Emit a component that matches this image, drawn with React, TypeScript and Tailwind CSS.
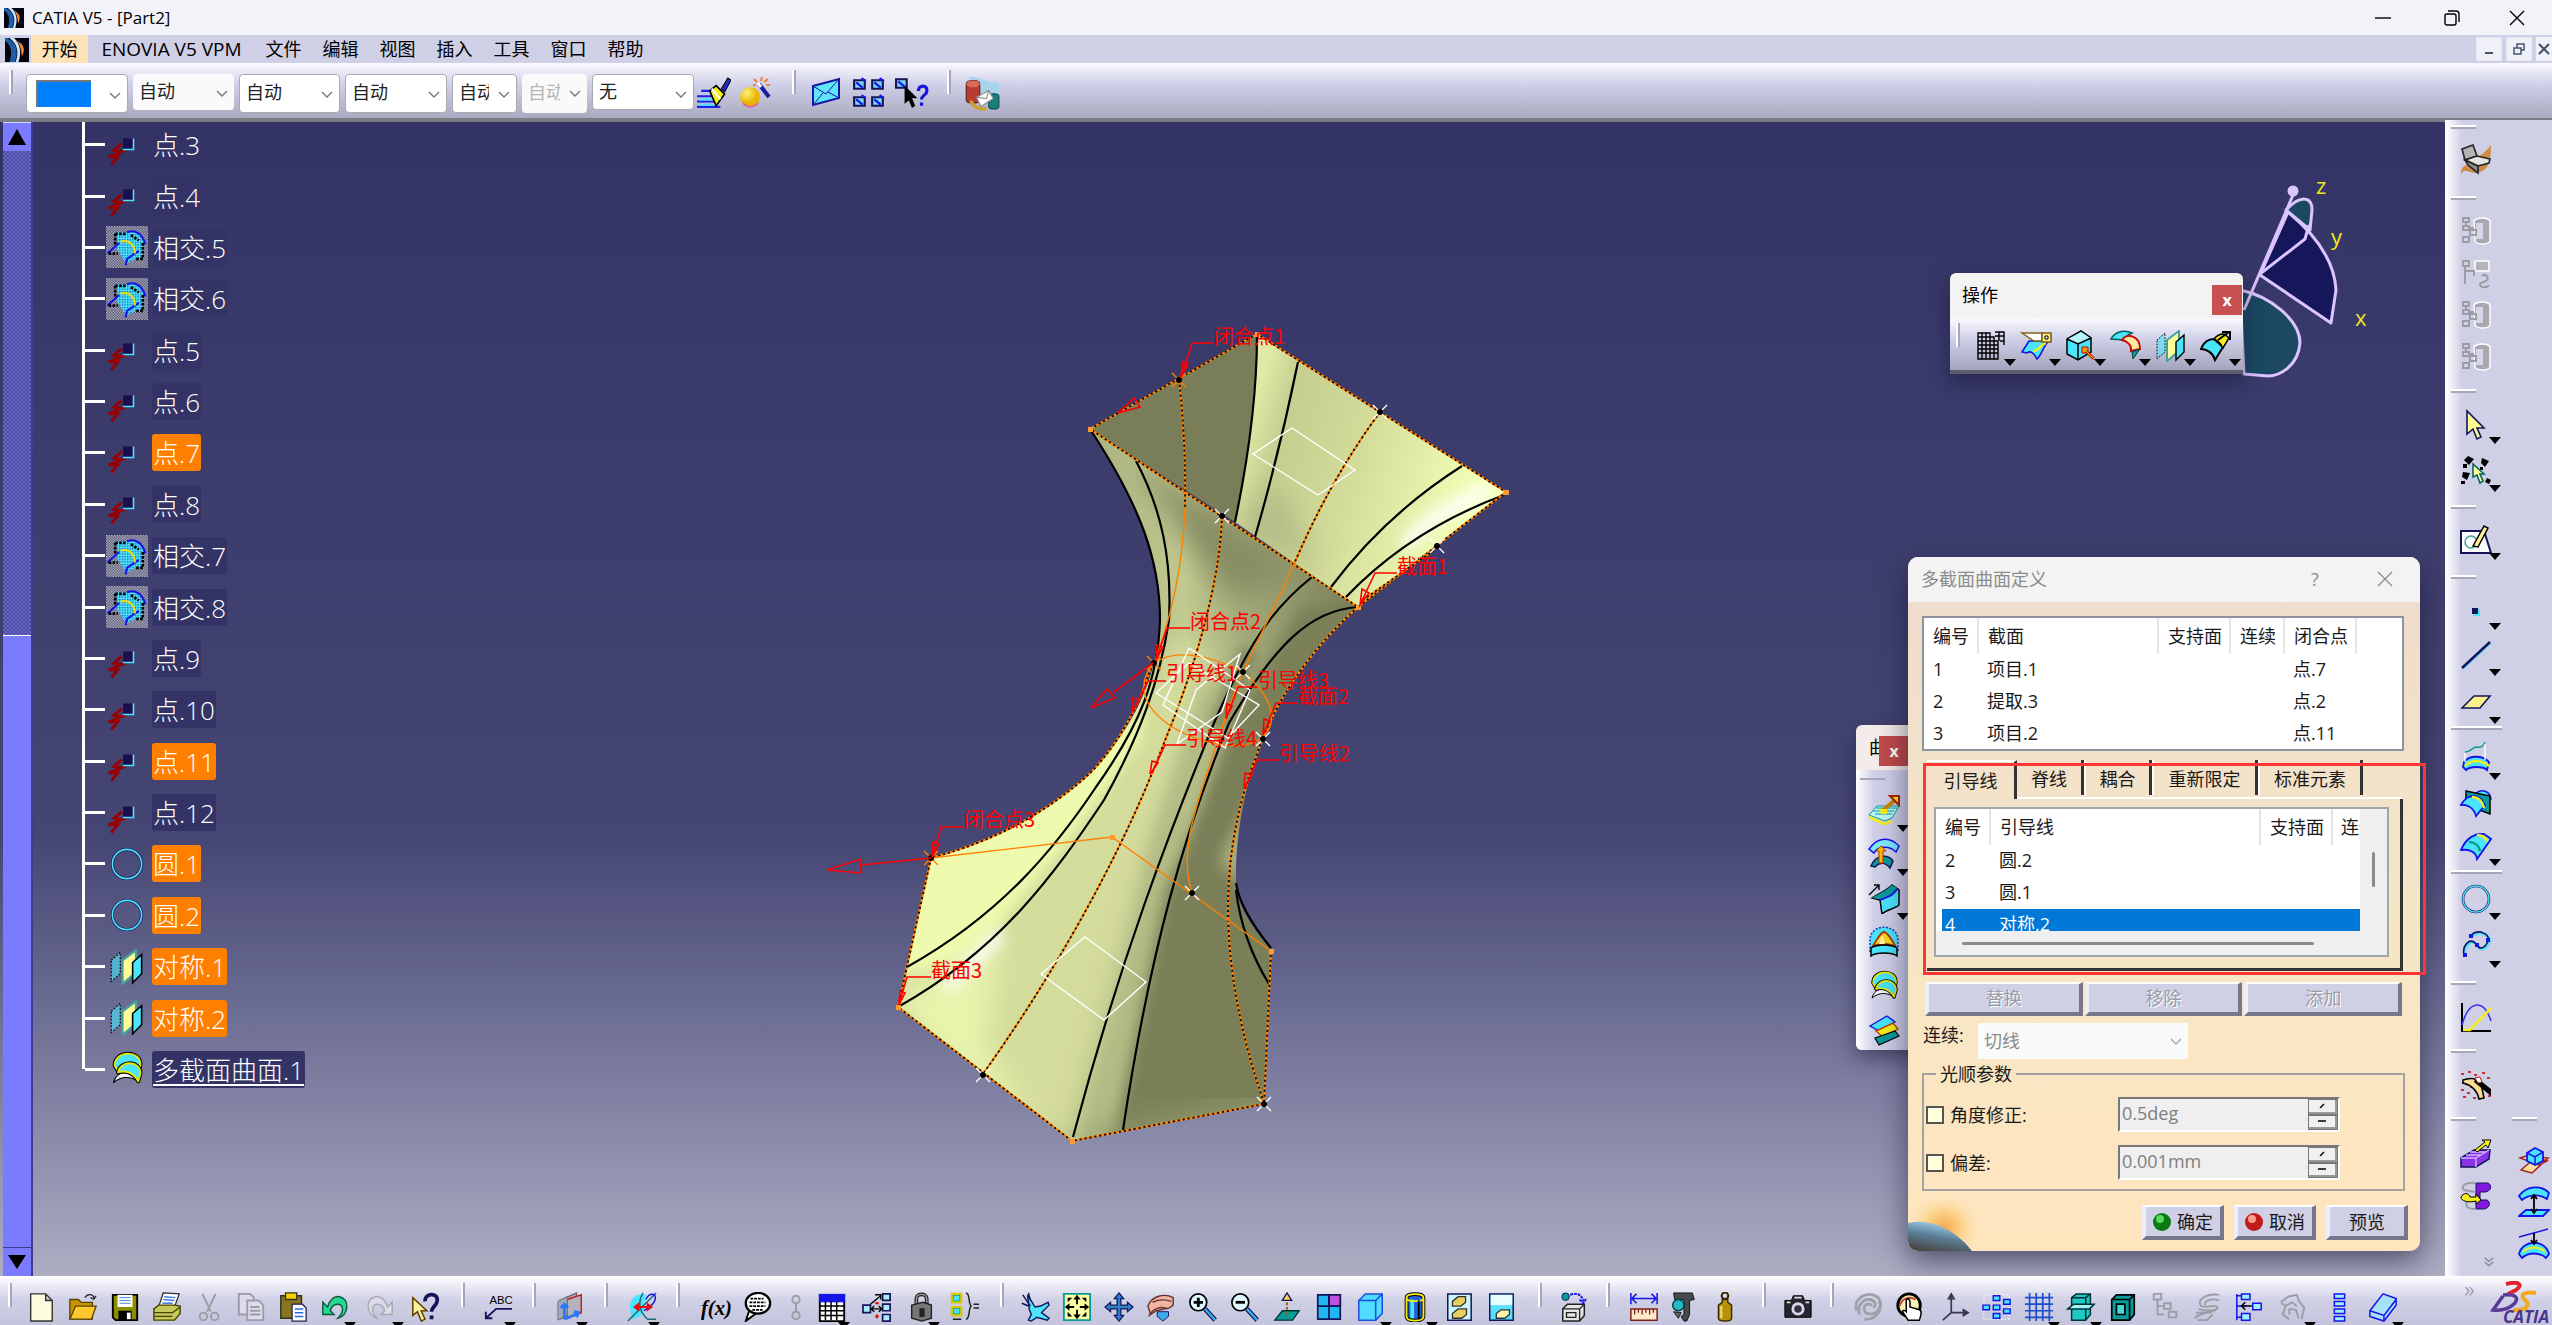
import type { ReactNode } from "react"

const C = "#4ae4fc"
const N = "#14145a"
const B = "#1414e6"
const Y = "#f6ee1c"
const T = "#0a9a9a"

const grey = { fill: "none", stroke: "#9c9ca4", strokeWidth: 2 }

const icons: Record<string, ReactNode> = {
  app: (
    <g>
      <rect width="32" height="32" fill="#050510" />
      <path d="M3 0C15 6 19 18 13 32H6C10 20 9 10 0 4V0Z" fill="#1f5fa8" />
      <path d="M6 0c11 8 13 20 8 32h4C23 18 19 6 12 0Z" fill="#c8e8ff" />
      <path d="M16 4c8 4 12 10 7 20-2-2 0-12-7-20Z" fill="#f08a2c" />
    </g>
  ),
  brush: (
    <g>
      <path d="M0 19h20M0 24h18M0 29h22M4 14h10" stroke="#2020f0" strokeWidth="2" />
      <path d="M2 22h16M2 27h16" stroke={C} strokeWidth="2" />
      <path d="M12 14 18 9l8 8-8 11Z" fill={Y} stroke="#000" strokeWidth="1.5" />
      <path d="m14 12 8 10" stroke="#fff" strokeWidth="2" />
      <path d="m23 12 6-10 3 2-6 11Z" fill="#2828d0" stroke="#000" />
    </g>
  ),
  wand: (
    <g>
      <defs>
        <radialGradient id="ball" cx="35%" cy="30%">
          <stop offset="0" stopColor="#fff27a" />
          <stop offset="1" stopColor="#e8b400" />
        </radialGradient>
      </defs>
      <circle cx="10" cy="21" r="10" fill="url(#ball)" />
      <path d="M3 27c4 5 11 5 15 0" stroke="#e060a0" strokeWidth="2" fill="none" />
      <path d="m19 8 10 13" stroke="#1c1c9c" strokeWidth="4" />
      <path d="m18 7 3 4" stroke="#fff" strokeWidth="3" />
      <path d="M14 3l3 3M22 1l-1 4M28 3l-4 3M13 9h3M26 9h4" stroke="#f08030" strokeWidth="2" />
    </g>
  ),
  mail: (
    <g>
      <path d="M3 10 29 3V22L3 29Z" fill="#5fe6fa" stroke="#1616a0" strokeWidth="2" />
      <path d="m3 10 13 8L29 3M3 29l10-12M29 22 18 16" fill="none" stroke="#1616a0" strokeWidth="1" />
    </g>
  ),
  squares: (
    <g fill="#7ad8f4" stroke={N} strokeWidth="2">
      <path d="M2 4h10v8H2ZM19 4h10v8H19ZM2 20h10v8H2ZM19 20h10v8H19Z" />
      <path d="m4 6 6 5M21 6l6 5M4 22l6 5M21 22l6 5M9 2l4 3M26 2l4 3M9 18l4 3M26 18l4 3" stroke={B} />
    </g>
  ),
  squareHelp: (
    <g>
      <path d="M1 3h10v8H1Z" fill="#7ad8f4" stroke={N} strokeWidth="2" />
      <path d="m3 5 6 5" stroke={B} strokeWidth="2" />
      <path d="m9 9 0 17 4-3 3 7 3-2-3-7h5Z" fill="#000" />
      <path d="M22 14c0-6 9-6 8 0 0 4-5 4-5 8m0 3v3" fill="none" stroke={B} strokeWidth="3" />
    </g>
  ),
  catalog: (
    <g>
      <path d="M4 1c8-2 16 6 27 5v12c-8 2-12-2-16-4Z" fill="#a7d4ea" />
      <path d="M2 7c0-4 12-4 12 0v14c0 4-12 4-12 0Z" fill="#b83c30" stroke="#6a1c14" />
      <ellipse cx="8" cy="7" rx="6" ry="3" fill="#d86c5c" />
      <path d="M22 18c0-3 9-3 9 0v9c0 3-9 3-9 0Z" fill="#16807c" stroke="#0c4c4c" />
      <path d="m11 19 11-6 4 7-11 7Z" fill="#fff" stroke="#888" />
      <path d="m11 19 9 1 2-7" fill="none" stroke="#888" />
      <path d="M6 22c2 6 8 8 14 7" stroke="#c8a030" strokeWidth="3" fill="none" />
    </g>
  ),
  point: (
    <g>
      <path d="M12 15 6 20l6 1-10 4 7 0-5 6" stroke="#960000" strokeWidth="2.2" fill="none" />
      <rect x="13" y="11" width="7" height="8" fill="#1a1050" />
      <path d="M21 11v8.500H13" stroke={C} strokeWidth="1.1" fill="none" />
    </g>
  ),
  intersect: (
    <g>
      <defs>
        <pattern id="dither" width="2" height="2" patternUnits="userSpaceOnUse">
          <path d="M0 0h1v1H0ZM1 1h1v1H1Z" fill="#c8c8c8" />
        </pattern>
        <pattern id="ditherBlue" width="2" height="2" patternUnits="userSpaceOnUse">
          <rect width="2" height="2" fill={C} />
          <path d="M0 0h1v1H0Z" fill="#1c5ca8" />
        </pattern>
      </defs>
      <rect width="32" height="32" fill="url(#dither)" />
      <path d="M7 5h9c6-2 11 2 13 8l-2 12h-5l-7 4-3-6-4-6 1-6Z" fill="url(#ditherBlue)" />
      <path d="M16 5c6-3 12 1 14 9M1 21l9-8M15 30l1-5 9-6" stroke={B} strokeWidth="1.6" fill="none" />
      <path d="M7 6h8M7 6v8M28 13v12h-5M2 21l7 0M19 7l6 4" stroke="#000" strokeWidth="2" strokeDasharray="2 1" fill="none" />
      <path d="M11 12c6-2 11 2 11 9" stroke="#f0e000" strokeWidth="1.6" fill="none" />
    </g>
  ),
  circle: (
    <g fill="none">
      <circle cx="16" cy="16" r="13" stroke={N} strokeWidth="2.6" />
      <circle cx="16" cy="16" r="13" stroke={C} strokeWidth="1.4" />
    </g>
  ),
  symmetry: (
    <g>
      <path d="M2 10 10 3v19l-8 7Z" fill={C} fillOpacity=".6" stroke="#000" strokeDasharray="1.5 1.5" />
      <path d="m12 10 12-9v20l-12 10Z" fill="#fdfd96" stroke="#46a0a0" strokeWidth="2" />
      <path d="m21 12 8-7v17l-8 8Z" fill={C} stroke="#000" strokeWidth="1.4" />
    </g>
  ),
  loft: (
    <g strokeLinejoin="round">
      <path d="M4 28c3-12 18-12 23 0-7-6-16-6-23 0Z" fill="#f4f4f4" stroke="#000" strokeWidth="1" />
      <path d="M5 13C5-1 28-1 28 12l-1 6H8Z" fill={C} stroke="#000" strokeWidth="3.4" />
      <path d="M5 13C5-1 28-1 28 12l-1 6H8Z" fill={C} stroke="#e8e800" strokeWidth="1.6" />
      <path d="M8 19C10 8 28 8 28 20l-2 7C22 19 14 17 8 19Z" fill={C} stroke="#000" strokeWidth="3.400" />
      <path d="M8 19C10 8 28 8 28 20l-2 7C22 19 14 17 8 19Z" fill={C} stroke="#e8e800" strokeWidth="1.6" />
    </g>
  ),
  gridTrim: (
    <g stroke="#000" strokeWidth="1.4" fill="none">
      <path d="M3 3h12v4h4v4h4v18H3ZM7 3v26M11 3v26M15 7v22M19 11v18M3 7h12M3 11h20M3 15h20M3 19h20M3 23h20" />
      <path d="M20 2h9v13M20 6h9M24 2v9M25 11h4" />
    </g>
  ),
  cut: (
    <g>
      <path d="M2 22 9 11h20c-5 3-6 12-12 18-3-6-7-9-10-6Z" fill={C} stroke={B} strokeWidth="1.6" />
      <path d="M13 21c6 0 8-7 13-8" stroke={Y} strokeWidth="2.4" fill="none" />
      <path d="M2 3h20v8H14Z" fill="#fff" stroke="#806010" strokeWidth="1.4" />
      <path d="M22 3h9v9h-9Z" fill="#fff080" stroke="#806010" strokeWidth="1.6" />
      <path d="M25 6h3v3h-3Z" fill="#fff" stroke="#000" />
    </g>
  ),
  cube: (
    <g>
      <path d="m2 9 14-8 10 7v14L13 30 2 24Z" fill={C} stroke="#000" strokeWidth="1.5" />
      <path d="m3 9 13-7 9 6-12 5Z" fill="#b8f4fc" />
      <path d="m2 9 11 5 13-6M13 14v16" stroke="#000" strokeWidth="1.5" fill="none" />
      <path d="M17 17h6v6h-6Z" fill="#f8a000" stroke="#c00000" />
      <path d="m21 21 8 8" stroke="#c03000" strokeWidth="3" />
      <path d="m21 21 8 8" stroke="#f8a000" strokeWidth="1" />
    </g>
  ),
  fillet: (
    <g>
      <path d="M1 9C6 0 16 0 22 3c-5 2-7 5-8 7Z" fill={C} stroke="#006060" strokeWidth="1.5" />
      <path d="M12 10c5-8 18-4 18 9l-9 2c1-6-4-10-9-11Z" fill="#fbe9a0" stroke="#d00000" strokeWidth="1.8" />
      <path d="m30 19-7 10-1-7Z" fill={T} stroke="#004040" />
    </g>
  ),
  extrapolate: (
    <g>
      <path d="M1 19c3-8 8-10 13-10l9 8-8 13c-2-7-8-11-14-11Z" fill={C} stroke="#000" strokeWidth="2" />
      <path d="M14 9c3-4 6-5 10-5l5 4-6 10c-2-4-4-7-9-9Z" fill={Y} stroke="#000" strokeWidth="1.5" />
      <path d="m18 10 11-8m-7 0h8v8" stroke="#000" strokeWidth="2" fill="none" />
    </g>
  ),
  offset: (
    <g>
      <path d="m1 21 8-9h22l-7 12-7 3-8-3Z" fill="#bdf6f6" stroke={T} strokeWidth="1" />
      <path d="m5 17h21M7 20h17M8 14h21" stroke={T} />
      <path d="m1 23 7 3 8 4 8-3" stroke={Y} strokeWidth="2.6" fill="none" />
      <path d="m13 18 14-12" stroke="#d08000" strokeWidth="4" />
      <path d="M11 15h8v5h-6Z" fill={Y} />
      <path d="M22 2h9v9Z" fill={Y} stroke="#b02000" strokeWidth="2" />
    </g>
  ),
  extrude: (
    <g>
      <path d="M1 11C10-2 23-1 31 8l-3 6C20 6 9 9 6 15Z" fill="#7eeafc" stroke={B} strokeWidth="1.5" />
      <path d="M3 28c5-12 17-12 22-5l-3 7c-5-6-10-6-15-1Z" fill={T} stroke={N} strokeWidth="1.5" />
      <path d="M11 25V13H8l5-5 5 5h-3v12Z" fill="#f8c000" stroke="#c03000" />
    </g>
  ),
  sweep: (
    <g>
      <path d="M4 16c6-4 14-7 20-13l7 5v15c-4 4-12 4-17 9l-2-14Z" fill={C} stroke="#000" strokeWidth="1.5" />
      <path d="M4 16c6-4 14-7 20-13l5 3c-4 7-10 8-17 11Z" fill={T} />
      <path d="M12 18c7-3 13-4 17-11" stroke={B} strokeWidth="2" fill="none" />
      <path d="M1 13 11 3M6 3h5v5" stroke="#000" strokeWidth="1.4" fill="none" />
    </g>
  ),
  fillSurf: (
    <g>
      <path d="M2 26V14C2-3 30-3 30 14v12Z" fill={C} stroke="#1a3aa0" strokeWidth="1.5" strokeDasharray="2 1.5" />
      <path d="M4 21C9 15 12 6 16 6s8 9 12 15c-7-4-17-4-24 0Z" fill="#ffd820" stroke="#b03000" strokeWidth="1.8" />
      <path d="M14 9l-3 9h6Z" fill="#fff8c0" />
      <path d="M3 30c5-4 21-4 26 0v-8c-6-4-20-4-26 0Z" fill={C} stroke="#000" strokeWidth="1.5" />
    </g>
  ),
  blend: (
    <g>
      <path d="m2 12 17-10 8 6-16 9Z" fill={C} stroke={B} strokeWidth="1.4" />
      <path d="m8 17 17-8 5 6-15 8Z" fill={Y} stroke="#c04000" strokeWidth="1.4" />
      <path d="m7 24 20-7 4 5-20 9Z" fill={T} stroke="#000" strokeWidth="1.2" />
    </g>
  ),
  workbench: (
    <g>
      <path d="M1 31c0-12 6-8 12-14 6-5 12-8 18-16 0 16-2 27-16 28-7 0-11-6-14 2Z" fill="#d08a48" />
      <path d="m2 5 11-4 4 11-12 4Z" fill="#b4b4b4" stroke="#222" strokeWidth="1.6" />
      <path d="m5 16 12-4 13 3-1 4-11 3Z" fill="#e4e4e4" stroke="#222" strokeWidth="1.6" />
      <path d="m5 16 13 6v7L8 21Z" fill="#8c8c8c" stroke="#222" strokeWidth="1.6" />
    </g>
  ),
  greyBody: (
    <g>
      <path d="M14 6c3-4 14-4 16 0v20c-2 4-13 4-15 0Z" fill="#a8a8b0" stroke="#fff" strokeWidth="1.5" />
      <path d="M16 8h7v16h-7Z" fill="#d6d6e6" />
      <path d="M3 3h6v4H3ZM3 11h6v4H3ZM10 15h6v5h-6ZM3 22h6v5H3ZM6 7v4M9 13h4v2" {...grey} />
    </g>
  ),
  greyBodySwap: (
    <g>
      <path d="M15 4h14v10H15Z" fill="#b4b4bc" stroke="#fff" strokeWidth="1.5" />
      <path d="M3 4h6v5H3ZM5 9v18M5 14h9v5M22 19c4-3 7 1 5 4s-8 2-7 5 7 3 9 0" {...grey} />
    </g>
  ),
  select: (
    <path d="M7 2v23l6-5 4 10 4-2-4-9h7Z" fill="#fdfd96" stroke={N} strokeWidth="1.6" />
  ),
  selectTrap: (
    <g>
      <path d="m8 2 6 3-5 6-5-5ZM22 4l7 3-4 6-4-4ZM3 18l7 1-3 7-5-3ZM1 27h4v3H1ZM20 13h3v3h-3ZM3 10h4v4H3ZM27 24l4 2-2 4-4-2Z" />
      <path d="M13 10v13l4-2 3 8 3-2-3-7h4Z" fill="#fdfd96" stroke="#066" strokeWidth="1.6" />
    </g>
  ),
  sketch: (
    <g>
      <path d="M1 6h23l7 22H1Z" fill="#fff" stroke={N} strokeWidth="2" />
      <circle cx="11" cy="17" r="6" fill="none" stroke="#40a890" strokeWidth="1.5" />
      <path d="M13 21 24 1l4 2-10 19Z" fill="#fdf09a" stroke="#000" strokeWidth="1.5" />
    </g>
  ),
  dot: (
    <g>
      <rect x="13" y="13" width="7" height="7" fill={C} />
      <rect x="12" y="12" width="6" height="6" fill={N} />
    </g>
  ),
  line: (
    <g>
      <path d="M3 30 31 4" stroke={C} strokeWidth="1.5" />
      <path d="M2 29 30 3" stroke={N} strokeWidth="2.4" />
    </g>
  ),
  plane: <path d="m2 22 12-12h16L20 22Z" fill="#fdf08c" stroke={N} strokeWidth="1.6" />,
  projection: (
    <g>
      <path d="M4 22c5-7 19-7 25 0l-2 8c-4-4-17-4-21 0l-3-3Z" fill={C} stroke={B} strokeWidth="1.8" />
      <path d="M5 26c6-6 16-7 24 0" stroke={Y} strokeWidth="2.4" fill="none" />
      <path d="M5 12c6 0 7-5 12-5 5 1 7-2 8-5" stroke={T} strokeWidth="1.4" fill="none" />
      <path d="M5 13v9M25 4v16" stroke="#fff" strokeWidth="1.4" />
    </g>
  ),
  surfCut: (
    <g>
      <path d="M16 6c7-5 14-1 15 6l-8 4Z" fill={C} stroke={B} strokeWidth="1.5" />
      <path d="m6 4 24 5v18L6 18Z" fill={T} stroke="#000" strokeWidth="1.5" />
      <path d="M1 18c5-9 12-11 19-7l5 7-9 11c-2-8-9-12-15-11Z" fill={C} stroke={B} strokeWidth="1.8" />
      <path d="M12 10c7 0 11 5 12 11" stroke={Y} strokeWidth="2.4" fill="none" />
    </g>
  ),
  surface: (
    <g>
      <path d="M1 20C6 8 15 3 24 4l7 5-14 20c-1-8-9-10-16-9Z" fill={C} stroke={B} strokeWidth="1.8" />
      <path d="M17 5c6 0 10 4 10 7" stroke={Y} strokeWidth="2.6" fill="none" />
      <path d="M9 12c6 0 10 4 11 9" stroke={T} strokeWidth="2.6" fill="none" />
    </g>
  ),
  spline: (
    <g>
      <path d="M12 6c8-7 20 0 17 6-3 7-8 10-12 3-6-8-14 2-12 11" stroke={C} strokeWidth="3" fill="none" />
      <path d="M11 5c8-7 20 0 17 6-3 7-8 10-12 3C10 6 2 16 4 25" stroke={N} strokeWidth="1.6" fill="none" />
      <path d="M9 4h4v4H9ZM15 13h4v4h-4ZM26 8h4v4h-4ZM3 23h4v4H3Z" fill={B} />
    </g>
  ),
  law: (
    <g fill="none" strokeWidth="2">
      <path d="M2 2v28h29" stroke="#000" />
      <path d="M2 24C9-2 24-2 31 20" stroke="#3434e8" strokeWidth="1.6" />
      <path d="M3 29h7L31 7" stroke={Y} strokeWidth="2.6" />
    </g>
  ),
  digitized: (
    <g>
      <path d="M1 5h3M8 3h3M14 6h3M22 4h3M2 14h3M1 21h3M7 24h3M3 28h3M13 29h3M20 28h3M27 9h3M10 18h3M28 27h3" stroke="#d03030" strokeWidth="2" />
      <path d="M3 11c8-3 14-2 18 4l3 14-5 1c-2-10-8-14-16-16Z" fill="#f8dc90" stroke="#000" strokeWidth="1.5" />
      <path d="m16 8 15 12v7L14 13Z" fill="#000" />
      <path d="m15 9 5-1 2 5-4 1Z" fill="#fff" stroke="#a03020" />
    </g>
  ),
  purpleBlock: (
    <g>
      <path d="m1 21 13-8h16l-1 9-13 8H1Z" fill="#8a34e8" stroke={N} strokeWidth="1.5" />
      <path d="m1 21h15l13-8M16 21v9M10 15h15M6 18h15" stroke="#d4b0ff" strokeWidth="1.4" fill="none" />
      <path d="m15 13 10-8-3-2h9l-3 8-2-3-9 7Z" fill={Y} stroke="#000" />
    </g>
  ),
  purpleRevolve: (
    <g>
      <path d="M16 3h12c4 2 4 8-3 9h-5v8h7c4 2 3 8-3 9h-8Z" fill="#8018e0" stroke={N} />
      <path d="M15 3C6 2 0 6 4 10l11 2M15 29c-8 0-10-4-8-7" {...grey} />
      <path d="M1 17c2-4 8-5 9 0h6v-3l5 6-5 4v-3c-8 2-15 0-15-4Z" fill={Y} stroke="#000" />
    </g>
  ),
  boxes: (
    <g>
      <path d="m2 14 9-3 18 6-8 4ZM3 26l15-13 12 1-16 15Z" fill="#fde0a0" stroke="#a02020" strokeWidth="1.5" />
      <path d="m9 9 8-5 8 4v9l-8 4-8-4Z" fill={C} stroke={B} strokeWidth="1.8" />
      <path d="m9 9 8 4 8-5M17 13v8" stroke={B} strokeWidth="1.5" fill="none" />
    </g>
  ),
  surfUp: (
    <g>
      <path d="M1 10C9-1 24-1 31 7l-2 6c-7-5-18-5-25 1Z" fill={C} stroke={B} strokeWidth="1.8" />
      <path d="m1 30 7-6h23l-6 6Z" fill={C} stroke={B} strokeWidth="1.8" />
      <path d="M16 10v16m-3-3 3 4 3-4m-6-10 3-4 3 4" stroke="#000" strokeWidth="1.8" fill="none" />
    </g>
  ),
  surfDown: (
    <g>
      <path d="M1 26c4-15 26-15 30 0l-3 4c-6-6-18-6-24 0Z" fill={C} stroke={B} strokeWidth="1.8" />
      <path d="M5 24c6-6 16-6 22 0" stroke={Y} strokeWidth="2" fill="none" />
      <path d="M1 9 30 1" stroke={B} strokeWidth="1.5" />
      <path d="M16 5v10m-3-3 3 4 3-4" stroke="#000" strokeWidth="1.8" fill="none" />
    </g>
  ),
  newFile: <path d="M5 2h16l7 7v22H5ZM21 2v7h7" fill="#fffde0" stroke="#333" strokeWidth="1.5" />,
  open: (
    <g stroke="#5a4200" strokeWidth="1.4">
      <path d="M2 8h9l3 3h12v18H2Z" fill="#c89400" />
      <path d="m2 29 6-14h22l-5 14Z" fill="#fcc82c" />
      <path d="M18 6c3-5 9-4 10 1l2-3M28 8l-4-2" fill="none" stroke="#222" />
    </g>
  ),
  save: (
    <g>
      <path d="M3 3h26v27H6l-3-3Z" fill="#8c8c00" stroke="#000" strokeWidth="2" />
      <path d="M8 3h16v13H8Z" fill="#fff" />
      <path d="M10 6h12M10 9h12M10 12h12" stroke="#4080e0" />
      <path d="M9 20h14v10H9Z" fill="#000" />
      <path d="M18 22h4v7h-4Z" fill="#fff" />
    </g>
  ),
  print: (
    <g>
      <path d="m12 1 17 1-5 14H7Z" fill="#fff" stroke="#333" strokeWidth="1.4" />
      <path d="m13 5 12 1M12 8l12 1M11 12h11" stroke="#4080e0" strokeWidth="1.6" />
      <path d="m2 18 5-4h17l6 1v8l-6 7H2Z" fill="#c6c85c" stroke="#444400" strokeWidth="1.5" />
      <path d="M2 22h20l8-6M2 26h20" stroke="#444400" strokeWidth="1.4" fill="none" />
    </g>
  ),
  scissors: (
    <g {...grey}>
      <path d="m9 2 9 19M23 2l-9 19" />
      <circle cx="10" cy="26" r="4" />
      <circle cx="22" cy="26" r="4" />
    </g>
  ),
  copy: (
    <g {...grey} fill="#dcdcec">
      <path d="M3 2h12l4 4v18H3Z" />
      <path d="M12 9h12l5 5v16H12ZM15 16h10M15 20h11M15 24h11" />
    </g>
  ),
  paste: (
    <g>
      <path d="M3 4h22v24H3Z" fill="#8a7420" stroke="#332" strokeWidth="1.6" />
      <path d="M8 1h12v7H8Z" fill="#f8d000" stroke="#332" strokeWidth="1.4" />
      <path d="M15 13h11l4 4v14H15Z" fill="#fff" stroke="#225" strokeWidth="1.4" />
      <path d="M18 18h9M18 22h9M18 26h9" stroke="#2868e0" strokeWidth="1.6" />
    </g>
  ),
  undo: (
    <path d="m3 11 0 13h12l-4-4c2-8 13-10 13-1 0 4-3 7-5 9 12-3 13-21 2-23-7-1-11 5-13 11Z" fill="#28d890" stroke="#0a5a40" strokeWidth="1.5" />
  ),
  redo: (
    <path d="m29 11 0 13H17l4-4c-2-8-13-10-13-1 0 4 3 7 5 9C1 25 0 7 11 5c7-1 11 5 13 11Z" fill="#dcdce8" stroke="#a8a8b0" strokeWidth="1.5" />
  ),
  whatsThis: (
    <g>
      <path d="M3 6v19l5-4 4 10 4-2-4-9h6Z" fill="#fdf09a" stroke="#5a4200" strokeWidth="1.6" />
      <path d="M16 10c-1-9 14-10 13-1 0 6-6 6-6 12m0 4v4" fill="none" stroke={N} strokeWidth="4" />
    </g>
  ),
  annotate: (
    <g>
      <text x="7" y="13" fontSize="12" fontFamily="Liberation Sans">ABC</text>
      <path d="M31 18H14L3 28m0-7v7h7" stroke={N} strokeWidth="2" fill="none" />
    </g>
  ),
  part: (
    <g>
      <path d="m5 9 18-8v20L5 29Z" fill="#a8a8b4" stroke="#666" strokeWidth="1.4" />
      <path d="m13 8 15-5v19l-15 6Z" fill="#b4b4bc" stroke="#c02028" strokeWidth="1.6" />
      <path d="m3 10 10-5v20L3 30Z" fill="#a0a8bc" stroke="#777" />
      <path d="M10 29V14m-4 3 4-4 4 4M10 29l14-6m-4-2 5 1-2 5" stroke="#2878ff" strokeWidth="3" fill="none" />
    </g>
  ),
  constraint: (
    <g>
      <path d="M3 15C4 4 13 1 20 3l-4 22-11 4Z" fill={C} />
      <path d="M1 31 31 1M17 1c-5 9-5 19 5 28h9" stroke="#1a6a80" strokeWidth="1.6" fill="none" />
      <path d="M20 8c4-8 12-7 10 0s-8 9-12 12" stroke={B} strokeWidth="1.6" fill="none" />
      <path d="M8 16h17M8 16l4-3v6ZM26 16l-4-3v6Z" stroke="#e01010" strokeWidth="2" fill="#e01010" />
    </g>
  ),
  formula: <text x="0" y="24" fontSize="22" fontStyle="italic" fontWeight="bold" fontFamily="Liberation Serif">f(x)</text>,
  comment: (
    <g>
      <path d="m8 19-4 12 12-9" fill="#fff" stroke="#000" strokeWidth="2" />
      <ellipse cx="17" cy="12" rx="13" ry="11" fill="#fff" stroke="#000" strokeWidth="2.4" />
      <path d="M9 7h14M8 11h17M8 15h17M11 19h11" stroke="#000" strokeWidth="2" strokeDasharray="3 1" />
    </g>
  ),
  link: (
    <g {...grey}>
      <circle cx="16" cy="8" r="4" />
      <circle cx="16" cy="25" r="4" />
      <path d="M16 12v9" />
    </g>
  ),
  table: (
    <g>
      <path d="M3 3h26v28H3Z" fill="#fff" stroke="#000" strokeWidth="2" />
      <path d="M2 2h28v9H2Z" fill={B} />
      <path d="M3 15h26M3 20h26M3 25h26M9 10v20M15 10v20M21 10v20" stroke="#000" strokeWidth="1.6" />
    </g>
  ),
  graph: (
    <g>
      <path d="M1 14h8v8H1ZM22 2h8v7h-8ZM22 13h8v7h-8ZM22 24h8v7h-8Z" fill="#a8ecf8" stroke={N} strokeWidth="1.8" />
      <path d="M10 18h11M9 13 20 4M14 3h6v5M13 15l-3 3 3 3M18 15l3 3-3 3" stroke="#000" strokeWidth="1.5" fill="none" />
      <path d="M14 12h4M14 26h4M16 24v4" stroke="#e01010" strokeWidth="2" />
    </g>
  ),
  lock: (
    <g stroke="#222" strokeWidth="1.5">
      <path d="M10 13V7c0-6 11-6 11 0v6" fill="none" strokeWidth="4" />
      <path d="M10 13V7c0-6 11-6 11 0v6" fill="none" stroke="#999" strokeWidth="1.5" />
      <path d="m5 14 12-3 9 3v14l-10 3-11-3Z" fill="#77777a" />
      <path d="M14 18h4v8h-4Z" fill="#222" />
    </g>
  ),
  equiv: (
    <g>
      <path d="M2 2h10v9H2ZM2 16h10v9H2Z" fill={T} stroke="#d8c800" strokeWidth="2.4" />
      <path d="M4 4h6v5H4ZM4 18h6v5H4Z" fill={C} />
      <path d="M17 1c5 0 2 13 6 14-4 1-1 14-6 14M25 13h6M25 17h6M3 29h9" stroke="#222" strokeWidth="1.6" fill="none" />
    </g>
  ),
  fly: (
    <g>
      <path d="m8 3 5 8 3 5 6-1 8-4 1 3-8 8 8 6-2 2-11-3-6 4-3-1 3-6-2-5Z" fill={C} stroke={N} strokeWidth="1.5" />
      <path d="M3 3l8 12M2 12l7 3M9 1l2 8" stroke={N} strokeWidth="1.6" />
    </g>
  ),
  fitAll: (
    <g>
      <path d="M2 2h28v28H2Z" fill="#ffffa0" stroke={T} strokeWidth="2" />
      <path d="m16 3 4 5h-3v5h-2V8h-3ZM16 29l4-5h-3v-5h-2v5h-3ZM3 16l5-4v3h5v2H8v3ZM29 16l-5-4v3h-5v2h5v3ZM6 6h5l-5 5ZM26 6h-5l5 5ZM6 26h5l-5-5ZM26 26h-5l5-5Z" />
    </g>
  ),
  pan: (
    <path d="m16 1 5 6h-3v7h7v-3l6 5-6 5v-3h-7v7h3l-5 6-5-6h3v-7H7v3l-6-5 6-5v3h7V7h-3Z" fill="#2c80c8" stroke={N} strokeWidth="1.3" />
  ),
  rotate: (
    <g>
      <path d="M2 15C6 4 20 1 29 6v8l-4 3-14 3-6 4Z" fill="#f0b4a0" stroke="#60302c" strokeWidth="1.5" />
      <path d="M3 26c5-10 14-11 20-8M7 11c6-3 14-3 20-1" stroke="#60302c" strokeWidth="1.5" fill="none" />
      <path d="M12 21h12v5l-6 5-6-5Z" fill="#40a8f0" stroke={N} />
    </g>
  ),
  zoomIn: (
    <g>
      <circle cx="11" cy="11" r="9" fill="#e0f8ff" stroke="#000" strokeWidth="1.8" />
      <path d="M11 6v10M6 11h10" stroke="#000" strokeWidth="3" />
      <path d="m18 18 11 12" stroke={N} strokeWidth="5" />
      <path d="m18 18 11 12" stroke="#38b0e8" strokeWidth="2.4" />
    </g>
  ),
  zoomOut: (
    <g>
      <circle cx="11" cy="11" r="9" fill="#e0f8ff" stroke="#000" strokeWidth="1.8" />
      <path d="M6 11h10" stroke="#000" strokeWidth="3" />
      <path d="m18 18 11 12" stroke={N} strokeWidth="5" />
      <path d="m18 18 11 12" stroke="#38b0e8" strokeWidth="2.4" />
    </g>
  ),
  normalView: (
    <g>
      <path d="m3 30 8-10h18l-7 10Z" fill={T} stroke="#033" strokeWidth="1.4" />
      <path d="M16 24V8" stroke="#a06000" strokeWidth="2" strokeDasharray="3 2" />
      <path d="m11 9 5-8 5 8Z" fill="#fcd060" stroke={N} strokeWidth="1.4" />
    </g>
  ),
  multiView: (
    <g stroke={N} strokeWidth="1.8">
      <path d="M4 3h24v26H4Z" fill="#20b8f0" />
      <path d="M16 3h12v12H16Z" fill="#c050e0" />
      <path d="M16 3v26M4 15h24" />
    </g>
  ),
  iso: (
    <g stroke="#1c4ce0" strokeWidth="1.6">
      <path d="m3 9 7-7h18v21l-7 7H3Z" fill="#50dcff" />
      <path d="M3 9h18l7-7M21 9v21" fill="none" />
    </g>
  ),
  shading: (
    <g>
      <path d="M7 6c0-5 18-5 18 0v20c0 6-18 6-18 0Z" fill="#2060d8" stroke="#000" strokeWidth="4" />
      <path d="M11 8h4v20h-4Z" fill={C} />
      <path d="M7 6c0-5 18-5 18 0s-18 5-18 0ZM7 6v20c0 6 18 6 18 0V6" fill="none" stroke={Y} strokeWidth="2" />
      <path d="M20 9v20" stroke="#000" strokeWidth="2" />
    </g>
  ),
  hideShow: (
    <g>
      <path d="M4 2h25v28H4Z" fill="#c8f8fc" stroke={N} strokeWidth="1.6" />
      <path d="m9 10 6-5h8v6l-5 4H9ZM9 23l6-5h9v6l-5 4H9Z" fill="#e8d060" stroke="#333" strokeWidth="1.4" />
    </g>
  ),
  swapSpace: (
    <g>
      <path d="M4 2h25v28H4Z" fill="#58e0fc" stroke={N} strokeWidth="1.6" />
      <path d="M5 3h23v11H5Z" fill="#e8fcff" />
      <path d="m11 23 5-4h9v5l-5 4h-9Z" fill="#fff4b0" stroke="#333" strokeWidth="1.4" />
    </g>
  ),
  catalogBox: (
    <g>
      <path d="m4 18 5-5h18v12l-5 6H4Z" fill="#e4e4e4" stroke="#222" strokeWidth="1.6" />
      <path d="M4 18h18l5-5M22 18v13M8 22h10v5H8Z" fill="none" stroke="#222" strokeWidth="1.4" />
      <circle cx="7" cy="5" r="4" fill={T} stroke={N} />
      <path d="M12 3c8-3 13 1 14 7m-4-2 4 4 3-5" stroke={B} strokeWidth="2" fill="none" strokeDasharray="3 1" />
    </g>
  ),
  ruler: (
    <g>
      <path d="M3 7h26M3 7l5-5M3 7l5 5M29 7l-5-5M29 7l-5 5M2 1v12M30 1v12" stroke={B} strokeWidth="1.6" />
      <path d="M2 18h28v12H2Z" fill="#fde8c8" stroke="#802020" strokeWidth="1.6" />
      <path d="M6 18v6M10 18v4M14 18v6M18 18v4M22 18v6M26 18v4" stroke="#802020" strokeWidth="1.4" />
    </g>
  ),
  caliper: (
    <g>
      <path d="M6 1h20l2 7-5 1v15l-3 7h-3l-3-5 3-2V8H7Z" fill="#444a4c" stroke="#111" />
      <circle cx="11" cy="14" r="6" fill="#28b8c8" stroke="#044" strokeWidth="1.5" />
      <path d="m6 21 8 1-3 6Z" fill="#666" stroke="#111" />
    </g>
  ),
  weight: (
    <g stroke="#3a2a00" strokeWidth="1.5">
      <circle cx="16" cy="4" r="3.5" fill="none" strokeWidth="2.2" />
      <path d="M13 8h6v3l4 3v14c0 4-14 4-14 0V14l4-3Z" fill="#b8900c" />
      <path d="M12 15v13" stroke="#f4d868" strokeWidth="2.4" />
    </g>
  ),
  camera: (
    <g>
      <path d="M2 9h7l2-5h10l2 5h7v18H2Z" fill="#26262e" stroke="#000" />
      <circle cx="16" cy="18" r="7" fill="#d8d8e8" />
      <circle cx="16" cy="18" r="4" fill="#334" />
      <path d="M12 6h8M4 11h4M24 11h4" stroke="#ddd" strokeWidth="2" />
    </g>
  ),
  swirl: (
    <g fill="none" stroke="#a0a0a8" strokeWidth="3">
      <path d="M4 20C0 8 12 1 21 3c8 2 11 10 6 16s-14 6-15 0 6-8 8-4" />
      <path d="M28 10c4 12-6 20-16 19M7 24C4 14 11 7 18 8c6 1 7 6 4 9" />
    </g>
  ),
  hand: (
    <g>
      <circle cx="15" cy="14" r="12" fill="#f8f4b0" stroke="#000" strokeWidth="3" />
      <path d="M5 15c2-8 10-11 17-7" stroke="#d04030" strokeWidth="2" fill="none" />
      <path d="M12 8c3-2 4 1 4 3v5l10 3c3 1 2 5 0 11H14l-6-9c1-3 4 0 4 0Z" fill="#fff" stroke="#000" strokeWidth="1.6" />
    </g>
  ),
  axis: (
    <path d="M12 2v20h17M12 22l-9 8M12 2l-3 5h6ZM30 22l-5-3v6Z" fill="none" stroke="#3c3450" strokeWidth="1.8" />
  ),
  bomTree: (
    <g>
      <path d="M2 3h27v26H2Z" fill="none" stroke="#fff" strokeDasharray="2 2" />
      <path d="M1 14h7v5H1ZM12 4h7v5h-7ZM12 14h7v5h-7ZM12 23h7v5h-7ZM23 8h7v5h-7ZM23 18h7v5h-7Z" fill={C} stroke={B} strokeWidth="1.5" />
    </g>
  ),
  grid: (
    <path d="M6 1v30M13 1v30M20 1v30M27 1v30M1 6h30M1 13h30M1 20h30M1 27h30" stroke="#1c50c8" strokeWidth="1.8" />
  ),
  layers: (
    <g stroke="#033" strokeWidth="1.6">
      <path d="m6 6 5-4h15v22l-5 6H6Z" fill="#20c8c8" />
      <path d="M6 6h15l5-4M21 6v24" fill="none" />
      <path d="m2 18 6-5h22l-5 5Z" fill="#a0f4f4" />
    </g>
  ),
  solid: (
    <g stroke="#000" strokeWidth="1.8">
      <path d="m4 8 5-5h19v21l-5 6H4Z" fill={T} />
      <path d="M4 8h19v22M23 8l5-5" fill="none" />
      <path d="M9 13h9v11H9Z" fill="#40d8d8" />
    </g>
  ),
  greyTree: <path d="M4 2h8v6H4ZM8 8v16h7M8 15h7M15 12h7v6h-7ZM20 21h8v6h-8Z" {...grey} />,
  greySwirl: <path d="M29 3C14 1 6 9 9 14s16-2 18 2-13 5-20 2M29 9C20 6 12 10 14 14M3 28c8-8 18-5 22-9M4 22h17M6 30h10l6-6" {...grey} />,
  treeIns: (
    <g>
      <path d="M3 2v28M3 4h5M3 15h10M3 27h5" stroke={B} strokeWidth="1.6" />
      <path d="M8 2h9v6H8ZM20 12h9v7h-9ZM8 23h9v7H8Z" fill="#a0f0fc" stroke={B} strokeWidth="1.6" />
      <path d="M19 15H8m4-4-4 4 4 4" stroke="#000" strokeWidth="1.6" fill="none" />
    </g>
  ),
  greyHand: <path d="m3 11 8-6 9-2 2 6 6 8-3 12M3 11l5 4-3 9 7 5M8 15l7-4 5 4M12 18l7 1 3 9M12 18v6" {...grey} />,
  stack: (
    <path d="M11 2h11v5H11ZM11 10h11v5H11ZM11 18h11v5H11ZM11 26h11v5H11Z" fill="#a0f0fc" stroke={B} strokeWidth="1.6" />
  ),
  eraser: (
    <g stroke={B} strokeWidth="1.6">
      <path d="M2 20 16 2l14 5v7L17 31 2 26Z" fill="#a8e0f8" />
      <path d="m2 20 15 5L30 8M17 25v6" fill="none" />
    </g>
  ),
}

function Icon({ name, className = "size-8" }: { name: string; className?: string }) {
  return (
    <svg viewBox="0 0 32 32" className={`shrink-0 ${className}`} aria-hidden="true">
      {icons[name]}
    </svg>
  )
}

function Triangle({ className }: { className: string }) {
  return (
    <svg viewBox="0 0 12 7" className={`absolute h-[7px] w-3 ${className}`} aria-hidden="true">
      <path d="M0 0h12L6 7Z" />
    </svg>
  )
}

function Chevron({ className }: { className: string }) {
  return (
    <svg viewBox="0 0 12 8" className={`pointer-events-none absolute h-2 w-3 ${className}`} aria-hidden="true">
      <path d="m1 1 5 5 5-5" fill="none" stroke="currentColor" strokeWidth="1.4" />
    </svg>
  )
}

const menus = ["文件", "编辑", "视图", "插入", "工具", "窗口", "帮助"]

const combos = [
  { label: "透明度", value: "自动", box: "w-[101px] h-9 bg-[#fafafa]" },
  { label: "线宽", value: "自动", box: "w-[101px] h-[39px] bg-white border border-[#a9a9b4]" },
  { label: "线型", value: "自动", box: "w-[102px] h-[39px] bg-white border border-[#a9a9b4]" },
  { label: "点型", value: "自动", box: "w-[65px] h-[39px] bg-white border border-[#a9a9b4]", narrow: true },
  { label: "渲染", value: "自动", box: "w-[65px] h-[39px] bg-[#fafafa]", narrow: true, off: true },
  { label: "图层", value: "无", box: "w-[102px] h-9 bg-white border border-[#a9a9b4]" },
]

const tree = [
  ["point", "点.3", ""],
  ["point", "点.4", ""],
  ["intersect", "相交.5", ""],
  ["intersect", "相交.6", ""],
  ["point", "点.5", ""],
  ["point", "点.6", ""],
  ["point", "点.7", "hot"],
  ["point", "点.8", ""],
  ["intersect", "相交.7", ""],
  ["intersect", "相交.8", ""],
  ["point", "点.9", ""],
  ["point", "点.10", ""],
  ["point", "点.11", "hot"],
  ["point", "点.12", ""],
  ["circle", "圆.1", "hot"],
  ["circle", "圆.2", "hot"],
  ["symmetry", "对称.1", "hot"],
  ["symmetry", "对称.2", "hot"],
  ["loft", "多截面曲面.1", "current"],
]

// name, cell height, has sub menu
const sideTools: [string, string, boolean?][] = [
  ["handle", "h-[14px]"],
  ["workbench", "h-[52px]"],
  ["handle", "h-6"],
  ["greyBody", "h-[42px]"],
  ["greyBodySwap", "h-[42px]"],
  ["greyBody", "h-[42px]"],
  ["greyBody", "h-[42px]"],
  ["handle", "h-[26px]"],
  ["select", "h-[42px]", true],
  ["selectTrap", "h-12", true],
  ["handle", "h-[26px]"],
  ["sketch", "h-[42px]", true],
  ["handle", "h-[30px]"],
  ["dot", "h-10", true],
  ["line", "h-[46px]", true],
  ["plane", "h-12", true],
  ["rule", "h-1"],
  ["projection", "h-[52px]", true],
  ["surfCut", "h-[42px]"],
  ["surface", "h-[44px]", true],
  ["rule", "h-2"],
  ["circle", "h-[46px]", true],
  ["spline", "h-12", true],
  ["handle", "h-[26px]"],
  ["law", "h-[42px]"],
  ["handle", "h-[26px]"],
  ["digitized", "h-[42px]"],
  ["handle", "h-[26px]"],
  ["purpleBlock", "h-[42px]"],
  ["purpleRevolve", "h-[44px]"],
]

// name, cell width, has sub menu
const bottomTools: [string, string, boolean?][] = [
  ["handle", "w-5"],
  ["newFile", "w-[42px]"],
  ["open", "w-[42px]"],
  ["save", "w-[42px]"],
  ["print", "w-[42px]"],
  ["scissors", "w-[42px]"],
  ["copy", "w-[42px]"],
  ["paste", "w-[42px]"],
  ["undo", "w-[42px]", true],
  ["redo", "w-12", true],
  ["whatsThis", "w-[42px]"],
  ["handle", "w-[34px]"],
  ["annotate", "w-9", true],
  ["handle", "w-9"],
  ["part", "w-9", true],
  ["handle", "w-9"],
  ["constraint", "w-9", true],
  ["handle", "w-9"],
  ["formula", "w-10"],
  ["comment", "w-[42px]"],
  ["link", "w-9"],
  ["table", "w-9", true],
  ["graph", "w-[54px]"],
  ["lock", "w-9", true],
  ["equiv", "w-[50px]"],
  ["handle", "w-6"],
  ["fly", "w-[42px]"],
  ["fitAll", "w-[42px]"],
  ["pan", "w-[42px]"],
  ["rotate", "w-[42px]"],
  ["zoomIn", "w-[42px]"],
  ["zoomOut", "w-[42px]"],
  ["normalView", "w-[42px]"],
  ["multiView", "w-[42px]"],
  ["iso", "w-[42px]", true],
  ["shading", "w-[46px]", true],
  ["hideShow", "w-[42px]"],
  ["swapSpace", "w-[42px]"],
  ["handle", "w-9"],
  ["catalogBox", "w-8"],
  ["handle", "w-9"],
  ["ruler", "w-9"],
  ["caliper", "w-[42px]"],
  ["weight", "w-[42px]"],
  ["handle", "w-9"],
  ["camera", "w-8"],
  ["handle", "w-9"],
  ["swirl", "w-9"],
  ["hand", "w-12"],
  ["axis", "w-[42px]"],
  ["bomTree", "w-[42px]"],
  ["grid", "w-[42px]", true],
  ["layers", "w-[42px]", true],
  ["solid", "w-[42px]"],
  ["greyTree", "w-[42px]"],
  ["greySwirl", "w-[42px]"],
  ["treeIns", "w-[42px]"],
  ["greyHand", "w-[46px]", true],
  ["stack", "w-[46px]"],
  ["eraser", "w-[42px]", true],
]

function TitleBar() {
  return (
    <header className="flex h-[35px] items-center bg-[#f1f3f8] pl-[3px] text-[17px] text-black">
      <Icon name="app" className="h-5 w-[22px]" />
      <h1 className="ml-[7px] flex-1">CATIA V5 - [Part2]</h1>
      <div className="flex items-center">
        <button aria-label="最小化" className="flex w-[69px] justify-center">
          <svg viewBox="0 0 16 16" className="size-4"><path d="M0 8h16" stroke="#000" strokeWidth="1.4" /></svg>
        </button>
        <button aria-label="还原" className="flex w-[69px] justify-center">
          <svg viewBox="0 0 16 16" className="size-4" fill="none" stroke="#000" strokeWidth="1.4">
            <rect x="1" y="4" width="11" height="11" rx="2" />
            <path d="M4 1h8q3 0 3 3v8" />
          </svg>
        </button>
        <button aria-label="关闭" className="mr-1 flex w-[62px] justify-center">
          <svg viewBox="0 0 16 16" className="size-4"><path d="m1 1 14 14M15 1 1 15" stroke="#000" strokeWidth="1.4" /></svg>
        </button>
      </div>
    </header>
  )
}

function MenuBar() {
  return (
    <nav className="flex h-7 items-stretch bg-[#cfcfe6] pl-[3px] text-[18px] leading-7 text-black">
      <Icon name="app" className="mt-[3px] h-6 w-7" />
      <button className="w-[57px] bg-[#fde2b8]">开始</button>
      <button className="w-[167px] whitespace-nowrap text-[19px]">ENOVIA V5 VPM</button>
      {menus.map((menu) => (
        <button key={menu} className="w-[57px]">{menu}</button>
      ))}
      <div className="ml-auto flex items-center text-[#44546c]">
        <button aria-label="最小化文档" className="mr-1 flex h-6 w-[26px] items-center justify-center border border-[#e6e6f2] bg-[#f0f0f8]">
          <svg viewBox="0 0 12 12" className="size-3"><path d="M2 10h8" stroke="currentColor" strokeWidth="2" /></svg>
        </button>
        <button aria-label="还原文档" className="mr-1 flex h-6 w-[26px] items-center justify-center border border-[#e6e6f2] bg-[#f0f0f8]">
          <svg viewBox="0 0 12 12" className="size-3" fill="none" stroke="currentColor" strokeWidth="1.5"><path d="M1 5h7v6H1ZM4 5V1h7v6H8" /></svg>
        </button>
        <button aria-label="关闭文档" className="flex h-6 w-4 items-center justify-center bg-[#f0f0f8]">
          <svg viewBox="0 0 12 12" className="size-3"><path d="m1 1 10 10M11 1 1 11" stroke="currentColor" strokeWidth="2" /></svg>
        </button>
      </div>
    </nav>
  )
}

function VHandle({ className = "" }: { className?: string }) {
  return <span className={`block h-6 w-1 border-r-2 border-[#a6a6b8] bg-white ${className}`} />
}

interface ComboProps {
  label: string
  value: string
  box: string
  narrow?: boolean
  off?: boolean
}

function Combo({ label, value, box, narrow, off }: ComboProps) {
  return (
    <div className={`relative shrink-0 overflow-hidden rounded-sm ${off ? "text-[#b4b4b8]" : "text-[#222]"} ${box}`}>
      <select
        aria-label={label}
        disabled={off}
        className={`size-full appearance-none overflow-hidden bg-transparent pb-0.5 pl-1.5 text-[18px] ${narrow ? "pr-[27px]" : "pr-5"}`}
      >
        <option>{value}</option>
      </select>
      <Chevron className="top-[16px] right-1.5 text-[#777]" />
    </div>
  )
}

function GraphicToolbar() {
  return (
    <div className="flex h-[59px] items-start border-b-4 border-[#7c7c84] bg-linear-to-b from-[#fafafe] via-[#cfcfe8] via-40% to-[#a9a9bf] pt-[11px] pl-[9px]">
      <VHandle className="-mt-1" />
      <div className="relative ml-[13px] h-[39px] w-[102px] shrink-0 rounded-sm border border-[#a9a9b4] bg-white">
        <button aria-label="填充颜色" className="mt-[5px] ml-[9px] block h-[27px] w-[55px] border-t-2 border-l-2 border-[#777] bg-[#0080ff]" />
        <Chevron className="top-[17px] right-1.5 text-[#777]" />
      </div>
      <div className="ml-[5px] flex gap-[5px]">
        {combos.map((combo) => (
          <Combo key={combo.label} {...combo} />
        ))}
      </div>
      <div className="flex items-start pt-[2px]">
        <button aria-label="格式刷" className="ml-[3px]"><Icon name="brush" className="size-[34px]" /></button>
        <button aria-label="图形属性向导" className="ml-[9px]"><Icon name="wand" /></button>
        <VHandle className="-mt-1.5 ml-[20px]" />
        <button aria-label="消息" className="ml-[14px]"><Icon name="mail" /></button>
        <button aria-label="实例" className="ml-[10px]"><Icon name="squares" className="size-[34px]" /></button>
        <button aria-label="查询" className="ml-[9px]"><Icon name="squareHelp" className="size-[34px]" /></button>
        <VHandle className="-mt-1.5 ml-[18px]" />
        <button aria-label="目录" className="ml-[13px]"><Icon name="catalog" className="size-[36px]" /></button>
      </div>
    </div>
  )
}

function Scrollbar() {
  return (
    <div className="ml-[3px] flex w-[30px] shrink-0 flex-col border-r-2 border-[#3c3c90] bg-[#7b7bff]">
      <button aria-label="向上滚动" className="flex h-[29px] items-center justify-center border-t border-[#d0d0ff]">
        <svg viewBox="0 0 18 16" className="h-4 w-[18px]"><path d="m9 0 9 16H0Z" /></svg>
      </button>
      <div className="h-[485px] border-b border-white bg-[#5555a8] bg-[repeating-conic-gradient(#6464cc_0_25%,#4e4e9c_0_50%)] bg-[length:4px_4px]" />
      <div className="flex-1 border-b border-[#3c3c90]" />
      <button aria-label="向下滚动" className="flex h-[28px] items-center justify-center">
        <svg viewBox="0 0 18 14" className="h-[14px] w-[18px]"><path d="M0 0h18L9 14Z" /></svg>
      </button>
    </div>
  )
}

function Tree() {
  return (
    <ul className="-mt-[3px] ml-[49px] flex h-[976px] flex-col">
      {tree.map(([icon, label, state], i) => (
        <li key={label} className="relative flex flex-1 items-center">
          <span className={`w-[3px] self-start bg-white ${i === tree.length - 1 ? "h-1/2" : "h-full"}`} />
          <span className="h-[3px] w-5 bg-white" />
          <Icon name={icon} className={icon === "intersect" || icon === "point" ? "ml-px size-[42px]" : "mr-[3px] ml-1 size-9"} />
          <button
            className={`ml-1 h-[37px] rounded-[3px] px-px text-[26px] leading-[38px] font-light text-white ${
              state === "hot" ? "bg-[#ff8000]" : "bg-[#333366]"
            } ${state === "current" ? "underline decoration-2 underline-offset-4" : ""}`}
          >
            {label}
          </button>
        </li>
      ))}
    </ul>
  )
}

const BODY =
  "M1090 429C1140 505 1160 560 1160 620C1158 690 1120 745 1086 777C1030 826 975 846 931 858L898 1007 1072 1141 1264 1104 1271 951C1250 925 1236 905 1236 883C1235 840 1244 790 1256 757C1275 700 1310 650 1358 607Z"
const INNER = "M1257 334 1506 492 1437 546 1358 607 1235 522Q1254 430 1257 334Z"

const blackLines = [
  "M1257 334C1257 400 1248 460 1235 522",
  "M1298 362Q1280 450 1255 537",
  "M1462 466Q1385 515 1331 587",
  "M1504 495Q1410 530 1346 597",
  "M1090 429C1140 505 1160 560 1160 620C1158 680 1140 725 1096 787C1054 850 1000 915 907 967",
  "M1136 461C1162 510 1172 560 1169 620C1160 680 1140 735 1104 800C1054 875 1000 950 898 1007",
  "M1312 577C1268 612 1246 650 1214 723C1170 830 1120 960 1073 1137",
  "M1358 607C1310 610 1275 645 1229 723C1185 830 1150 950 1123 1130",
  "M1236 883Q1240 910 1271 948",
  "M1236 890Q1242 940 1269 984",
]

const dashedLines = [
  "M1257 334 1090 429 1358 607 1506 492Z",
  "M1430 553 1363 600",
  "M1380 412Q1330 480 1294 564",
  "M1179 380Q1186 440 1185 507",
  "M1222 516C1220 590 1190 680 1164 743C1120 860 1050 980 983 1074",
  "M1358 607C1310 650 1275 700 1256 757C1220 850 1215 960 1264 1103",
  "M1152 663C1140 710 1110 755 1086 777C1030 826 975 846 931 858",
  "M931 858 898 1007 1072 1141 1264 1104 1271 951",
]

const orangeLines = [
  "M1185 507Q1182 590 1154 663",
  "M1294 564C1270 620 1240 670 1223 725C1195 810 1178 850 1192 893",
  "M931 858 1112 837 1271 951",
  "M1147 673C1160 648 1200 650 1243 672C1290 710 1275 750 1227 745C1185 742 1130 710 1147 673Z",
]

const callouts: [number, number, string, string][] = [
  [1214, 344, "闭合点1", "M1214 343h-22l-11 35M1181 376l2-14 5 2ZM1118 413l16-15 6 9Z"],
  [1190, 629, "闭合点2", "M1190 628h-23l-11 32M1156 660l1-15 6 2Z"],
  [1397, 574, "截面1", "M1397 573h-22l-15 32M1360 605l2-16 7 4Z"],
  [1166, 681, "引导线1", "M1166 681h-18l-16 32M1132 713l1-15 6 2Z"],
  [1258, 688, "引导线3", "M1258 687h-20l-12 32M1226 718l1-14 5 2Z"],
  [1298, 704, "截面2", "M1298 703h-22l-13 32M1263 735l1-16 6 2Z"],
  [1186, 746, "引导线4", "M1186 745h-21l-13 28M1150 774l2-13 6 2Z"],
  [1279, 761, "引导线2", "M1279 760h-22l-12 28M1244 788l1-15 7 2Z"],
  [964, 827, "闭合点3", "M964 827h-23l-9 30M932 857l1-15 6 2ZM931 858l-70 7M827 870l34-11v14Z"],
  [931, 978, "截面3", "M931 977h-24l-8 28M899 1005l1-14 5 2ZM1153 663l-39 29M1091 708l16-19 8 9Z"],
]

const crosses = [
  [1179, 380, "#ff8000"], [1380, 412, "#fff"], [1222, 516, "#fff"], [1437, 546, "#fff"],
  [1154, 663, "#ff8000"], [1243, 672, "#fff"], [1263, 739, "#fff"], [931, 858, "#ff8000"],
  [1192, 893, "#fff"], [983, 1075, "#fff"], [1264, 1104, "#fff"],
] as const

const corners = [[1257, 334], [1090, 429], [1506, 492], [1358, 607], [898, 1007], [1072, 1141], [1271, 951], [1112, 837]]

function Model() {
  return (
    <svg viewBox="800 310 740 850" className="absolute top-[188px] left-[800px] h-[850px] w-[740px]" role="img" aria-label="多截面曲面">
      <defs>
        <linearGradient id="body" gradientUnits="userSpaceOnUse" x1="1090" y1="0" x2="1360" y2="0">
          <stop offset="0" stopColor="#aab280" />
          <stop offset=".35" stopColor="#c2ca90" />
          <stop offset=".6" stopColor="#a0a676" />
          <stop offset="1" stopColor="#7a7f59" />
        </linearGradient>
        <linearGradient id="inner" gradientUnits="userSpaceOnUse" x1="1245" y1="430" x2="1470" y2="500">
          <stop offset="0" stopColor="#e0eaa6" />
          <stop offset=".15" stopColor="#c6ce90" />
          <stop offset=".5" stopColor="#d4dc9a" />
          <stop offset="1" stopColor="#f2ffb6" />
        </linearGradient>
        <filter id="soft" x="-30%" y="-30%" width="160%" height="160%"><feGaussianBlur stdDeviation="14" /></filter>
        <filter id="fine" x="-30%" y="-30%" width="160%" height="160%"><feGaussianBlur stdDeviation="7" /></filter>
        <clipPath id="bodyClip"><path d={BODY} /></clipPath>
        <clipPath id="innerClip"><path d={INNER} /></clipPath>
      </defs>

      <path d={BODY} fill="url(#body)" />
      <g clipPath="url(#bodyClip)">
        <path d="M1170 640 1140 700 920 840 880 1010 1072 1150 1150 860 1215 650Z" fill="#d4dc9c" filter="url(#soft)" />
        <path d="M1150 660 1130 720 900 830 880 980 970 960 1060 850 1140 740Z" fill="#eefbae" filter="url(#fine)" />
        <path d="M890 1000 1000 940 985 1050 1060 1150 1000 1120Z" fill="#e8f4ac" filter="url(#soft)" />
        <path d="M1000 925 935 990 955 988 1005 940Z" fill="#fff" fillOpacity=".9" filter="url(#fine)" />
        <path d="M1215 690 1160 860 1100 1150" stroke="#b4bb84" strokeWidth="26" fill="none" filter="url(#fine)" />
        <path d="M1360 600 1300 608 1235 720 1165 890 1110 1160 1290 1130 1290 940 1220 860 1300 700Z" fill="#7a7f59" filter="url(#fine)" />
        <path d="M1250 650 1215 730" stroke="#6f7450" strokeWidth="12" filter="url(#fine)" />
        <path d="M1100 1150 1280 1110" stroke="#8c9466" strokeWidth="40" filter="url(#soft)" />
        <path d="M1130 460 1220 510 1300 570 1230 600Z" fill="#878d63" filter="url(#soft)" />
      </g>
      <path d="M1257 334 1090 429 1235 522Q1254 430 1257 334Z" fill="#797e58" />
      <path d={INNER} fill="url(#inner)" />
      <g clipPath="url(#innerClip)">
        <path d="M1235 530 1275 480 1320 570Z" fill="#b4bb86" filter="url(#soft)" />
        <path d="M1490 488 1430 520 1405 545" stroke="#fff" strokeWidth="13" fill="none" filter="url(#fine)" />
      </g>

      <g fill="none" stroke="#000" strokeWidth="2.2">
        {blackLines.map((d) => <path key={d} d={d} />)}
      </g>
      <g fill="none" strokeWidth="2">
        {dashedLines.map((d) => (
          <g key={d}>
            <path d={d} stroke="#ff8000" />
            <path d={d} stroke="#000" strokeWidth="1.8" strokeDasharray="2 3" />
          </g>
        ))}
      </g>
      <g fill="none" stroke="#ff8000" strokeWidth="1.4">
        {orangeLines.map((d) => <path key={d} d={d} />)}
      </g>
      <g fill="none" stroke="#fff" strokeWidth="1.4">
        <path d="M1292 428 1355 470 1318 495 1253 454ZM1085 937l61 45-42 38-63-46Z" />
        <path d="M1189 648 1163 705 1225 748 1250 690ZM1156 693 1189 663 1259 705 1228 738ZM1240 654 1196 690 1177 744 1222 712Z" />
      </g>
      {crosses.map(([x, y, color]) => (
        <g key={`${x}-${y}`}>
          <path d={`M${x - 7} ${y - 7}l14 14M${x + 7} ${y - 7}l-14 14`} stroke={color} strokeWidth="1.4" />
          <circle cx={x} cy={y} r="3" />
        </g>
      ))}
      {corners.map(([x, y]) => (
        <rect key={`${x}-${y}`} x={x - 2} y={y - 2} width="5" height="5" fill="#ff9a30" />
      ))}
      <g fill="#ff0000" fontSize="20" fontWeight="400" fontFamily="'Noto Sans CJK SC', sans-serif">
        {callouts.map(([x, y, text, leader]) => (
          <g key={text}>
            <path d={leader} fill="none" stroke="#ff0000" strokeWidth="1.6" />
            <text x={x} y={y}>{text}</text>
          </g>
        ))}
      </g>
    </svg>
  )
}

function Compass() {
  return (
    <svg viewBox="2230 182 150 200" className="absolute top-[60px] left-[2230px] h-[200px] w-[150px]" role="img" aria-label="罗盘">
      <g stroke="#dcc4ff" strokeWidth="3" strokeLinejoin="round">
        <path d="M2288 212Q2334 250 2336 290L2331 323 2260 275Z" fill="#16165a" />
        <path d="M2286 210C2300 195 2312 196 2312 210L2310 230Z" fill="#1c4862" />
        <path d="M2309 225 2305 239 2260 274" fill="none" />
        <path d="M2240 290C2270 296 2300 320 2300 343C2298 366 2280 376 2268 376L2244 374Z" fill="#1c4862" />
        <path d="M2293 195 2244 310" fill="none" />
        <circle cx="2293" cy="191" r="4" fill="#dcc4ff" />
      </g>
      <g fill="#f0e818" fontSize="22" fontFamily="'Open Sans', sans-serif">
        <text x="2316" y="194">z</text>
        <text x="2331" y="245">y</text>
        <text x="2355" y="326">x</text>
      </g>
    </svg>
  )
}

function OperationsPanel() {
  const tools = ["gridTrim", "cut", "cube", "fillet", "symmetry", "extrapolate"]
  return (
    <section className="absolute top-[151px] left-[1950px] w-[293px] rounded-t-md bg-[#f3f3f3] shadow-[0_8px_20px_rgba(20,20,50,0.5)]">
      <div className="flex h-[46px] items-start justify-between pr-px pl-3">
        <h2 className="pt-2.5 text-[18px] leading-6">操作</h2>
        <button aria-label="关闭操作" className="mt-3 h-[30px] w-[30px] bg-[#c75050] text-[16px] font-bold text-white">x</button>
      </div>
      <div className="flex h-[55px] border-b-4 border-[#5c5c6c] bg-linear-to-b from-[#fafafe] via-[#cfcfe8] via-40% to-[#a4a4bc] pl-[6px]">
        <VHandle className="mt-1" />
        <div className="ml-[15px] flex gap-[13px] pt-[11px]">
          {tools.map((tool) => (
            <button key={tool} aria-label={tool} className="relative size-8">
              <Icon name={tool} />
              <Triangle className="-right-[9px] -bottom-1" />
            </button>
          ))}
        </div>
      </div>
    </section>
  )
}

function SurfacesPanel() {
  const tools = ["offset", "extrude", "sweep", "fillSurf", "loft", "blend"]
  return (
    <section className="absolute top-[603px] left-[1856px] w-[90px] rounded-md bg-[#f3ecea] shadow-[0_8px_20px_rgba(20,20,50,0.5)]">
      <div className="flex h-[45px] items-start pl-[13px]">
        <h2 className="w-[10px] overflow-hidden pt-2.5 text-[18px] leading-6 whitespace-nowrap">曲</h2>
        <button aria-label="关闭曲面" className="mt-[11px] h-[30px] w-[30px] bg-[#c04a4a] text-[16px] font-bold text-white">x</button>
      </div>
      <div className="rounded-b-md bg-linear-to-r from-white via-[#cfcfe8] via-20% to-[#cfcfe8] pb-1 pl-1">
        <span className="block h-[10px] w-[25px] border-b-2 border-[#a6a6b8]" />
        <div className="mt-3 ml-2 flex flex-col gap-[12px] pt-[2px]">
          {tools.map((tool, i) => (
            <button key={tool} aria-label={tool} className="relative size-8">
              <Icon name={tool} />
              {i < 3 && <Triangle className="-right-[9px] -bottom-1.5" />}
            </button>
          ))}
        </div>
      </div>
    </section>
  )
}

const raised = "border-t-2 border-l-4 border-r-4 border-b-4 border-t-white border-l-[#eeeefa] border-r-[#76768c] border-b-[#76768c] bg-[#cfcfe6]"

function Spin({ id, value }: { id: string; value: string }) {
  return (
    <div className="ml-auto flex h-[35px] w-[222px] border-2 border-t-[#777] border-r-white border-b-white border-l-[#777] bg-[#efefef]">
      <input id={id} disabled defaultValue={value} className="w-0 flex-1 px-0.5 pb-1 text-[18px] text-[#808080]" />
      <div className="flex w-[30px] flex-col bg-[#777]">
        <button disabled aria-label="增加" className="m-px flex flex-1 items-center justify-center border-r-2 border-b-2 border-[#999] bg-[#f0f0f0]">
          <svg viewBox="0 0 10 6" className="h-1.5 w-2.5"><path d="m3 5 4-4" stroke="#000" strokeWidth="1.5" /></svg>
        </button>
        <button disabled aria-label="减少" className="m-px flex flex-1 items-center justify-center border-r-2 border-b-2 border-[#999] bg-[#f0f0f0]">
          <svg viewBox="0 0 10 6" className="h-1.5 w-2.5"><path d="M1 3h8" stroke="#000" strokeWidth="1.5" /></svg>
        </button>
      </div>
    </div>
  )
}

const th = "border-r-2 border-[#e5e5e5] pl-[9px] text-left font-normal"

function LoftDialog() {
  return (
    <section className="absolute top-[435px] left-[1908px] w-[512px] rounded-[10px] bg-linear-to-b from-[#eedbcd] via-[#f5e6c6] via-50% to-[#ffe5be] text-[18px] leading-6 text-[#1a1a1a] shadow-[0_10px_30px_rgba(20,20,50,0.6)]">
      <div className="flex h-[45px] items-center rounded-t-[10px] bg-[#f3f3f3] pb-0.5 pl-[13px] text-[#8c8c8c]">
        <h2 className="flex-1">多截面曲面定义</h2>
        <button aria-label="帮助" className="w-[70px]">?</button>
        <button aria-label="关闭" className="flex w-[70px] justify-center">
          <svg viewBox="0 0 16 16" className="size-4"><path d="m1 1 14 14M15 1 1 15" stroke="currentColor" strokeWidth="1.4" /></svg>
        </button>
      </div>

      <div className="mt-3.5 mr-4 ml-3.5 h-[135px] border-2 border-[#8d949e] bg-white">
        <table className="w-full table-fixed border-collapse">
          <thead>
            <tr className="h-9">
              <th className={`w-[54px] ${th}`}>编号</th>
              <th className={`w-[180px] ${th}`}>截面</th>
              <th className={`w-[72px] ${th}`}>支持面</th>
              <th className={`w-[54px] ${th}`}>连续</th>
              <th className={`w-[72px] ${th}`}>闭合点</th>
              <td />
            </tr>
          </thead>
          <tbody>
            {[["1", "项目.1", "点.7"], ["2", "提取.3", "点.2"], ["3", "项目.2", "点.11"]].map(([no, section, point]) => (
              <tr key={no} className="h-8">
                <td className="pb-0.5 pl-[9px]">{no}</td>
                <td className="pb-0.5 pl-[9px]">{section}</td>
                <td />
                <td />
                <td className="pb-0.5 pl-[9px]" colSpan={2}>{point}</td>
              </tr>
            ))}
          </tbody>
        </table>
      </div>

      <div role="tablist" className="mt-[9px] ml-[19px] flex h-[39px] leading-[38px]">
        <button role="tab" aria-selected="true" className="w-[90px] border-t-2 border-r-[3px] border-t-white border-r-[#333] pb-1">引导线</button>
        <div className="mr-[18px] flex flex-1 border-b-2 border-white">
          <button role="tab" className="mb-0.5 w-[67px] border-r-[3px] border-[#333]">脊线</button>
          <button role="tab" className="mb-0.5 w-[68px] border-r-[3px] border-l-2 border-r-[#333] border-l-white">耦合</button>
          <button role="tab" className="mb-0.5 w-[106px] border-r-[3px] border-l-2 border-r-[#333] border-l-white">重新限定</button>
          <button role="tab" className="mb-0.5 w-[105px] border-r-[3px] border-l-2 border-r-[#333] border-l-white">标准元素</button>
        </div>
      </div>
      <div className="mr-[17px] ml-[19px] h-[172px] border-r-[3px] border-b-[3px] border-[#333] pt-2 pr-[11px] pl-[7px]">
        <div className="h-[150px] border-2 border-[#a0a5ad] bg-[#efefef]">
          <div className="flex h-[122px]">
            <div className="w-0 flex-1 overflow-hidden bg-white pl-1.5">
              <table className="w-full table-fixed border-collapse whitespace-nowrap">
                <thead>
                  <tr className="h-9">
                    <th className="w-12 border-r-2 border-[#e5e5e5] pl-[3px] text-left font-normal">编号</th>
                    <th className={`w-[270px] ${th}`}>引导线</th>
                    <th className={`w-[72px] ${th}`}>支持面</th>
                    <th className="overflow-hidden pl-2 text-left font-normal">连续</th>
                  </tr>
                </thead>
                <tbody>
                  {[["2", "圆.2"], ["3", "圆.1"], ["4", "对称.2"]].map(([no, guide]) => (
                    <tr key={no} className={no === "4" ? "h-8 bg-[#0078d7] text-white" : "h-8"}>
                      <td className="pb-0.5 pl-[3px]">{no}</td>
                      <td className="pb-0.5 pl-[9px]" colSpan={3}>{guide}</td>
                    </tr>
                  ))}
                </tbody>
              </table>
            </div>
            <div className="w-[27px] pt-[43px] pl-[12px]">
              <span className="block h-[35px] w-[3px] rounded bg-[#8a8a8a]" />
            </div>
          </div>
          <span className="mt-[11px] ml-[26px] block h-[3px] w-[352px] rounded bg-[#8a8a8a]" />
        </div>
      </div>

      <div className="mt-[11px] mr-[18px] ml-[17px] grid h-[34px] grid-cols-3 gap-0.5 text-[#9c9ca6]">
        {["替换", "移除", "添加"].map((label) => (
          <button key={label} disabled className={`leading-7 [text-shadow:1px_1px_0_#fff] ${raised}`}>{label}</button>
        ))}
      </div>

      <div className="mt-[7px] ml-[15px] flex h-9">
        <label htmlFor="continuity" className="w-[55px]">连续:</label>
        <div className="relative w-[210px] bg-[#fafafa] text-[#8a8a8a]">
          <select id="continuity" disabled className="size-full appearance-none pl-1.5">
            <option>切线</option>
          </select>
          <Chevron className="top-[15px] right-1.5 text-[#aaa]" />
        </div>
      </div>

      <fieldset className="mt-[3px] mr-[15px] ml-3.5 border-2 border-[#a3a3a3] pr-[63px] pb-[9px] pl-[2px]">
        <legend className="ml-2.5 px-1">光顺参数</legend>
        <div className="mt-[11px] flex items-center">
          <input id="angle" type="checkbox" className="mr-1.5 size-[18px] appearance-none border-2 border-[#555] bg-[#ffffdc]" />
          <label htmlFor="angle">角度修正:</label>
          <Spin id="angle-value" value="0.5deg" />
        </div>
        <div className="mt-[13px] flex items-center">
          <input id="deviation" type="checkbox" className="mr-1.5 size-[18px] appearance-none border-2 border-[#555] bg-[#ffffdc]" />
          <label htmlFor="deviation">偏差:</label>
          <Spin id="deviation-value" value="0.001mm" />
        </div>
      </fieldset>

      <div className="relative mt-3.5 flex justify-end gap-[10px] pr-3 pb-[11px]">
        <svg viewBox="0 0 76 60" className="absolute bottom-0 left-0 h-[60px] w-[76px] rounded-bl-[10px]" aria-hidden="true">
          <defs>
            <radialGradient id="glow" cx="50%" cy="60%" r="50%">
              <stop offset="0" stopColor="#f8a850" />
              <stop offset=".5" stopColor="#fbd48a" />
              <stop offset="1" stopColor="#ffe5be" stopOpacity="0" />
            </radialGradient>
            <linearGradient id="earth" x1="0.2" y1="1" x2=".6" y2="0">
              <stop offset="0" stopColor="#4a4440" />
              <stop offset=".5" stopColor="#5a7c94" />
              <stop offset="1" stopColor="#a8dcf8" />
            </linearGradient>
          </defs>
          <ellipse cx="36" cy="30" rx="38" ry="34" fill="url(#glow)" />
          <path d="M0 32C26 26 50 42 64 60H0Z" fill="url(#earth)" />
        </svg>
        <button className={`flex h-[35px] w-[82px] items-center justify-center gap-1.5 ${raised}`}>
          <svg viewBox="0 0 18 18" className="size-[18px]"><circle cx="9" cy="9" r="9" fill="#0a7a14" /><circle cx="7" cy="6" r="4" fill="#5ad85a" /></svg>
          确定
        </button>
        <button className={`flex h-[35px] w-[82px] items-center justify-center gap-1.5 ${raised}`}>
          <svg viewBox="0 0 18 18" className="size-[18px]"><circle cx="9" cy="9" r="9" fill="#c01c1c" /><circle cx="7" cy="6" r="4" fill="#ff9a8a" /></svg>
          取消
        </button>
        <button className={`h-[35px] w-[82px] ${raised}`}>预览</button>
      </div>

      <div className="pointer-events-none absolute top-[206px] left-[15px] h-[212px] w-[503px] border-[3px] border-[#ff3636]" />
    </section>
  )
}

function SideToolbar() {
  return (
    <aside className="-mt-[2px] flex w-[107px] shrink-0 border-l border-white bg-linear-to-r from-white via-[#cfcfe6] via-15% to-[#cfcfe6]">
      <div className="flex w-[58px] flex-col pl-[5px]">
        {sideTools.map(([name, height, sub], i) =>
          name === "handle" || name === "rule" ? (
            <div key={i} className={`flex items-center ${height}`}>
              <span className={`h-1 border-b-2 border-[#a6a6b8] bg-white ${name === "rule" ? "w-[51px]" : "w-[25px]"}`} />
            </div>
          ) : (
            <button key={i} aria-label={name} className={`relative flex w-[50px] items-center pl-[9px] ${height}`}>
              <Icon name={name} />
              {sub && <Triangle className="right-0 bottom-0.5" />}
            </button>
          ),
        )}
        <span className="mt-8 ml-[36px] rotate-90 self-start text-[22px] leading-6 text-[#909098]">»</span>
      </div>
      <div className="flex flex-col justify-end pb-[11px] pl-2">
        <span className="mb-[18px] h-1 w-[25px] border-b-2 border-[#a6a6b8] bg-white" />
        {["boxes", "surfUp", "surfDown"].map((name) => (
          <button key={name} aria-label={name} className="flex h-[42px] items-center pl-1.5">
            <Icon name={name} />
          </button>
        ))}
      </div>
    </aside>
  )
}

function BottomToolbar() {
  return (
    <footer className="relative flex h-[49px] shrink-0 bg-linear-to-b from-white via-[#cfcfe6] via-50% to-[#c4c4dc]">
      {bottomTools.map(([name, width, sub], i) =>
        name === "handle" ? (
          <div key={i} className={`flex shrink-0 justify-center pt-[7px] ${width}`}>
            <VHandle />
          </div>
        ) : (
          <button key={i} aria-label={name} className={`relative flex shrink-0 justify-center pt-4 ${width}`}>
            <Icon name={name} className="size-[30px]" />
            {sub && <Triangle className="right-0 -bottom-1" />}
          </button>
        ),
      )}
      <span className="ml-[60px] text-[22px] leading-6 text-[#a0a0ac]">»</span>
      <div className="absolute right-0 bottom-0 flex w-[64px] flex-col items-center">
        <svg viewBox="0 0 60 32" className="h-8 w-[60px]" fill="none" strokeWidth="4" aria-hidden="true">
          <path d="M16 3c12-3 18 0 10 6l-8 4" stroke="#e0262c" />
          <path d="m13 15-10 14c8 1 16-1 22-7 4-6 0-9-12-8" stroke="#5a3a98" strokeWidth="3.500" />
          <path d="M46 12c-12-2-17 2-11 7s2 11-12 10" stroke="#f4a81c" />
        </svg>
        <span className="-mt-1 pl-3 text-[17px] leading-4 font-bold text-[#4c3490] italic">CATIA</span>
      </div>
    </footer>
  )
}

export default function App() {
  return (
    <div className="flex h-screen flex-col overflow-hidden bg-[#cfcfe6] font-['Open_Sans','Noto_Sans_CJK_SC',sans-serif]">
      <TitleBar />
      <MenuBar />
      <GraphicToolbar />
      <main className="flex min-h-0 flex-1">
        <div className="relative flex min-w-0 flex-1 overflow-hidden bg-linear-to-b from-[#333366] via-[#464674] via-62% to-[#adadc3]">
          <Scrollbar />
          <Tree />
          <Model />
          <Compass />
          <OperationsPanel />
          <SurfacesPanel />
          <LoftDialog />
        </div>
        <SideToolbar />
      </main>
      <BottomToolbar />
    </div>
  )
}
